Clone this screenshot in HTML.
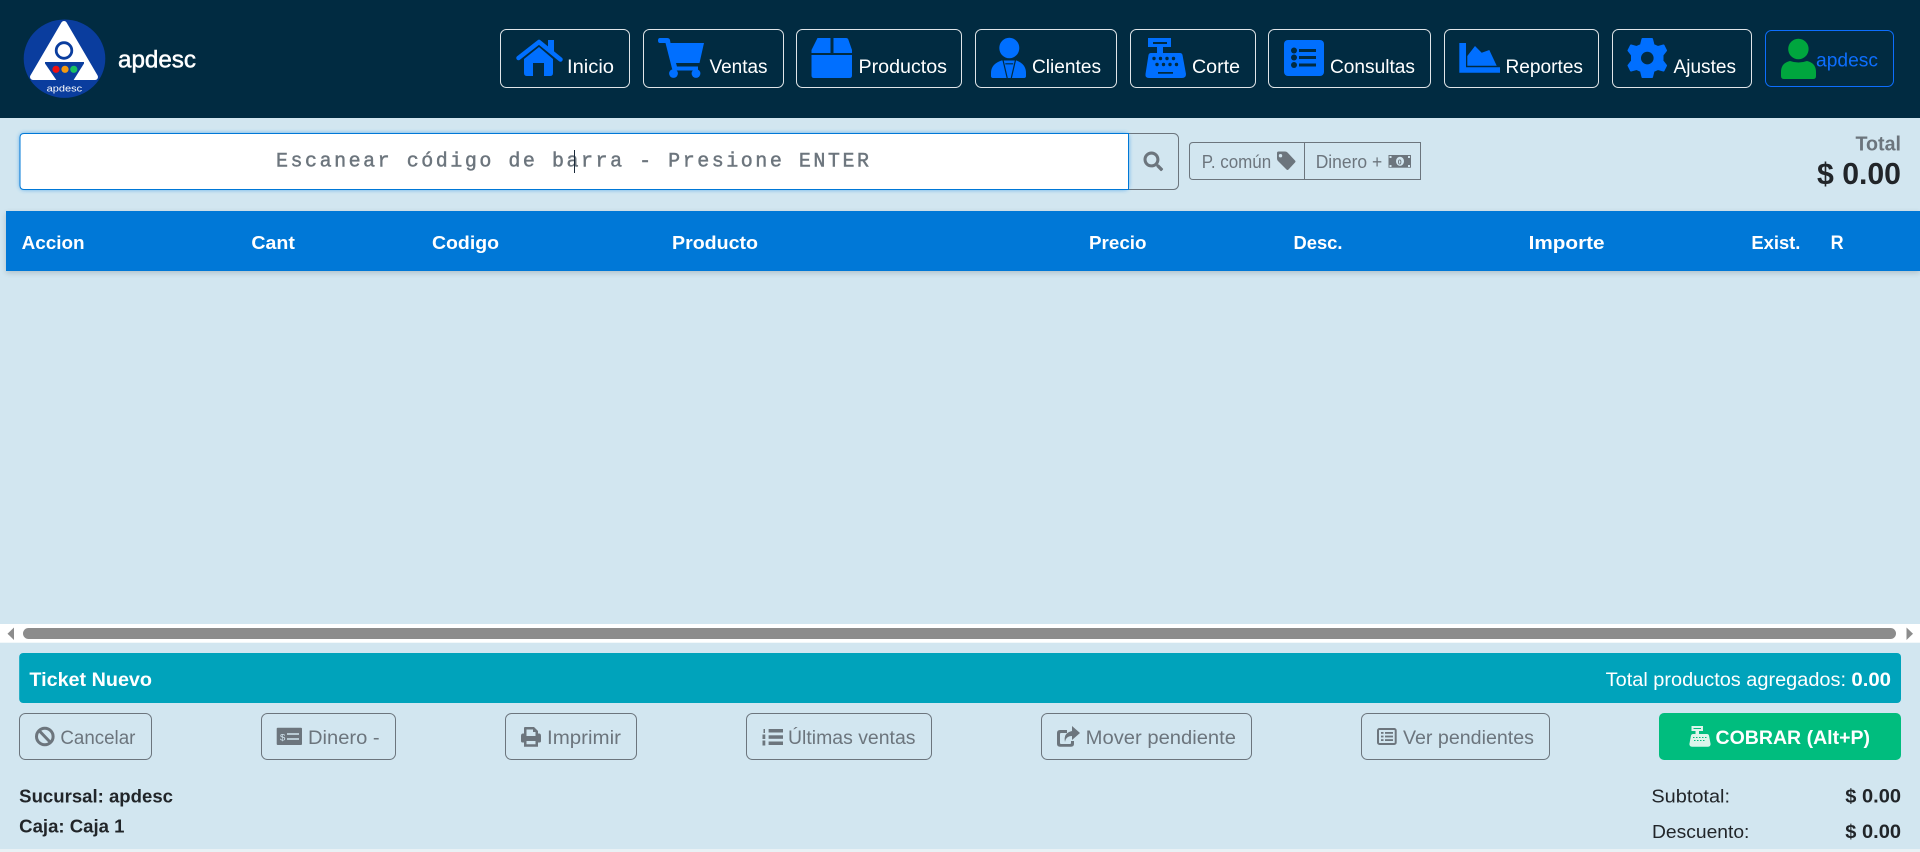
<!DOCTYPE html>
<html lang="es"><head><meta charset="utf-8"><title>apdesc</title>
<style>
html,body{margin:0;padding:0;background:#D2E6F0;overflow:hidden}
svg{display:block}
text{font-family:"Liberation Sans",sans-serif}
.n{font-size:19px;fill:#fff}
.th{font-size:18px;font-weight:700;fill:#fff}
.g{font-size:18px;fill:#6c757d}
.k{font-size:18px;font-weight:700;fill:#212529}
.r{font-size:18px;fill:#212529}
.i{fill:#006FFF}
.btn{fill:none;stroke:#fff;stroke-width:1;opacity:.88}
.ob{fill:none;stroke:#6c757d;stroke-width:1}
</style></head><body>
<svg xmlns="http://www.w3.org/2000/svg" width="1920" height="852" viewBox="0 0 1920 852">
<defs>
<filter id="gl" x="-2%" y="-30%" width="104%" height="160%"><feGaussianBlur stdDeviation="2.5"/></filter>
<filter id="sh" x="-1%" y="-20%" width="102%" height="160%"><feGaussianBlur stdDeviation="3"/></filter>
</defs>
<rect width="1920" height="852" fill="#D2E6F0"/>
<rect y="849" width="1920" height="3" fill="#E9F1F5"/>
<!-- header -->
<rect width="1920" height="118" fill="#012B41"/>
<!-- logo -->
<ellipse cx="64.5" cy="58.7" rx="40.8" ry="39.2" fill="#0A3D9E"/>
<path d="M64 24 L95 77 H33 Z" fill="#fff" stroke="#fff" stroke-width="6" stroke-linejoin="round"/>
<circle cx="64" cy="50.5" r="7.8" fill="#fff" stroke="#0A3D9E" stroke-width="2.8"/>
<path d="M45 62 H84 V63.500 L73 81 H57 L45 63.500 Z" fill="#0A3D9E"/>
<circle cx="56" cy="69.3" r="3.6" fill="#F01010"/><circle cx="65" cy="69.3" r="3.6" fill="#F59A10"/><circle cx="73.8" cy="69.3" r="3.6" fill="#18C060"/>
<text x="46.7" y="91.5" font-size="9.5" fill="#fff" textLength="35.5" lengthAdjust="spacingAndGlyphs">apdesc</text>
<text x="118" y="67.5" font-size="24" fill="#fff" stroke="#fff" stroke-width=".5" textLength="78" lengthAdjust="spacingAndGlyphs">apdesc</text>
<!-- nav -->
<rect class="btn" x="500.500" y="29.500" width="129" height="58" rx="6"/>
<path class="i" d="M539 47 L553 59 V73 Q553 76 550 76 H544 V63 H533 V76 H527 Q524 76 524 73 V59 Z"/>
<path fill="none" stroke="#006FFF" stroke-width="4.500" stroke-linecap="round" stroke-linejoin="round" d="M518.500 58 L539 42 L560.500 59.500"/>
<rect class="i" x="548" y="40" width="6" height="12"/>
<text class="n" x="567" y="73" textLength="47" lengthAdjust="spacingAndGlyphs">Inicio</text>

<rect class="btn" x="643.500" y="29.500" width="140" height="58" rx="6"/>
<path class="i" d="M660 38 H667 Q669.500 38 670 40 L670.500 43 H704 L699.500 63 H676 L677 66.500 H698 V70.500 H675 Q672.500 70.500 672 68.500 L665.500 43 H660 Q658 43 658 40.500 Q658 38 660 38 Z"/>
<circle class="i" cx="673.500" cy="73.500" r="4.400"/><circle class="i" cx="696" cy="73.500" r="4.400"/>
<text class="n" x="709.500" y="73" textLength="58" lengthAdjust="spacingAndGlyphs">Ventas</text>

<rect class="btn" x="796.500" y="29.500" width="165" height="58" rx="6"/>
<path class="i" d="M817.500 38 H830.500 V53 H811.500 V50 Z M833.500 38 H846 Q848 38 848.500 40 L852 50 V53 H833.500 Z M811.500 55 H852 V75.500 Q852 78 849.500 78 H814 Q811.500 78 811.500 75.500 Z"/>
<text class="n" x="858.500" y="73" textLength="88.500" lengthAdjust="spacingAndGlyphs">Productos</text>

<rect class="btn" x="975.500" y="29.500" width="141" height="58" rx="6"/>
<ellipse class="i" cx="1009.300" cy="48" rx="10" ry="10.300"/>
<path class="i" d="M1001.500 60.500 Q991 64 991 73 V76 Q991 78 993 78 H1024 Q1026 78 1026 76 V73 Q1026 64 1016.500 60.500 Z"/>
<path fill="none" stroke="#012B41" stroke-width="1.200" d="M1003 60 L1007.200 78 M1015.500 60 L1011.300 78 M1005.300 63.800 H1013.200"/>
<text class="n" x="1032" y="73" textLength="69" lengthAdjust="spacingAndGlyphs">Clientes</text>

<rect class="btn" x="1130.500" y="29.500" width="125" height="58" rx="6"/>
<path class="i" fill-rule="evenodd" d="M1148 38 H1171 V47 H1163 V53 H1180 Q1182 53 1182.500 55 L1186 74 Q1186 78 1182 78 H1149 Q1145 78 1145.500 74 L1148.500 55 Q1149 53 1151 53 H1157 V47 H1148 Z M1153 42 V44 H1167 V42 Z M1158 72 V73.800 H1173 V72 Z"/>
<g fill="#012B41"><circle cx="1154" cy="58.500" r="1.700"/><circle cx="1160.500" cy="58.500" r="1.700"/><circle cx="1167" cy="58.500" r="1.700"/><circle cx="1173.500" cy="58.500" r="1.700"/><circle cx="1157" cy="64.500" r="1.700"/><circle cx="1163.500" cy="64.500" r="1.700"/><circle cx="1170" cy="64.500" r="1.700"/><circle cx="1176.500" cy="64.500" r="1.700"/></g>
<text class="n" x="1192" y="73" textLength="48" lengthAdjust="spacingAndGlyphs">Corte</text>

<rect class="btn" x="1268.500" y="29.500" width="162" height="58" rx="6"/>
<rect class="i" x="1284" y="40" width="40" height="36" rx="4"/>
<g fill="#012B41"><circle cx="1294" cy="50.500" r="3"/><circle cx="1294" cy="57.500" r="3"/><circle cx="1294" cy="65" r="3"/><rect x="1299" y="49" width="17" height="3"/><rect x="1299" y="56" width="17" height="3"/><rect x="1299" y="63.500" width="17" height="3"/></g>
<text class="n" x="1330" y="73" textLength="85" lengthAdjust="spacingAndGlyphs">Consultas</text>

<rect class="btn" x="1444.500" y="29.500" width="154" height="58" rx="6"/>
<path class="i" d="M1459.300 43 H1466 V67.300 H1500 V72.800 H1459.300 Z M1467.300 65.700 V56 L1475 46 L1481.700 52.700 L1489.300 50 L1496.700 65.700 Z"/>
<text class="n" x="1505.500" y="73" textLength="77.500" lengthAdjust="spacingAndGlyphs">Reportes</text>

<rect class="btn" x="1612.500" y="29.500" width="139" height="58" rx="6"/>
<path class="i" stroke="#006FFF" stroke-width="2" stroke-linejoin="round" fill-rule="evenodd" d="M1642.500 39 H1652 L1653.500 45 L1658 47 L1663.500 45.500 L1666 50.500 L1662.500 55 V61 L1666 65.500 L1663.500 70.500 L1658 69 L1653.500 71 L1652 77 H1642.500 L1641 71 L1636.500 69 L1631 70.500 L1628.500 65.500 L1632 61 V55 L1628.500 50.500 L1631 45.500 L1636.500 47 L1641 45 Z M1647.300 50.800 A7.300 7.300 0 1 0 1647.310 65.400 A7.300 7.300 0 1 0 1647.300 50.800 Z"/>
<text class="n" x="1673.500" y="73" textLength="62.500" lengthAdjust="spacingAndGlyphs">Ajustes</text>

<rect x="1765.500" y="30.500" width="128" height="56" rx="6" fill="none" stroke="#0D6EFD"/>
<ellipse cx="1798.400" cy="49" rx="10.200" ry="10.300" fill="#00A63E"/>
<path d="M1790 61 Q1798.500 64 1807 61 Q1816 63 1816 72 V76 Q1816 79 1813 79 H1784 Q1781 79 1781 76 V72 Q1781 63 1790 61 Z" fill="#00A63E"/>
<text x="1816" y="66.500" font-size="19" fill="#0D6EFD" textLength="62" lengthAdjust="spacingAndGlyphs">apdesc</text>

<!-- search -->
<rect x="1120" y="133.500" width="58.500" height="56" rx="5" class="ob"/>
<rect x="20" y="133.500" width="1108.500" height="56" rx="4" fill="#3B9BE8" opacity=".9" filter="url(#gl)"/>
<path d="M24 133.500 H1128.500 V189.500 H24 Q20 189.500 20 185.500 V137.500 Q20 133.500 24 133.500 Z" fill="#fff" stroke="#0078D7" stroke-width="1"/>
<text x="276" y="166.500" style="font-family:'Liberation Mono',monospace" font-size="20" fill="#6c757d" stroke="#6c757d" stroke-width=".45" textLength="593">Escanear código de barra - Presione ENTER</text>
<rect x="574" y="150" width="1" height="23" fill="#1a2a3a"/>
<path transform="translate(1143.500 151.500) scale(.0383)" fill="#6c757d" d="M505 442.700L405.300 343c-4.500-4.500-10.600-7-17-7H372c27.600-35.300 44-79.700 44-128C416 93.100 322.900 0 208 0S0 93.100 0 208s93.100 208 208 208c48.300 0 92.700-16.400 128-44v16.300c0 6.400 2.500 12.500 7 17l99.700 99.700c9.400 9.400 24.600 9.400 33.900 0l28.300-28.300c9.400-9.400 9.400-24.600.1-34zM208 336c-70.700 0-128-57.200-128-128 0-70.700 57.200-128 128-128 70.700 0 128 57.200 128 128 0 70.700-57.200 128-128 128z"/>

<!-- small group -->
<path class="ob" d="M1193 142.500 H1420.500 V179.500 H1193 Q1189.500 179.500 1189.500 176 V146 Q1189.500 142.500 1193 142.500 Z M1304.500 142.500 V179.500"/>
<text class="g" x="1201.700" y="167.800" textLength="69.500" lengthAdjust="spacingAndGlyphs">P. común</text>
<path fill="#6c757d" fill-rule="evenodd" d="M1277 153 Q1277 151.500 1278.500 151.500 H1285 Q1286.500 151.500 1287.500 152.500 L1295 160.500 Q1296 161.500 1295 162.500 L1288.500 169.500 Q1287.500 170.500 1286.500 169.500 L1278 161 Q1277 160 1277 158.500 Z M1280.500 154 A1.700 1.700 0 1 0 1280.510 157.400 A1.700 1.700 0 1 0 1280.500 154 Z"/>
<text class="g" x="1315.700" y="167.800" textLength="66.500" lengthAdjust="spacingAndGlyphs">Dinero +</text>
<rect x="1388.500" y="155" width="22.500" height="12.700" fill="#6c757d"/>
<ellipse cx="1400" cy="161.300" rx="4" ry="4.600" fill="#D2E6F0"/>
<text x="1397.800" y="164.500" font-size="7" fill="#6c757d" font-weight="700">0</text>
<g fill="#D2E6F0"><rect x="1389.500" y="156" width="2" height="2"/><rect x="1408" y="156" width="2" height="2"/><rect x="1389.500" y="165" width="2" height="2"/><rect x="1408" y="165" width="2" height="2"/></g>

<!-- total -->
<text x="1855.500" y="150.700" font-size="20" font-weight="700" fill="#6c757d" textLength="45.500" lengthAdjust="spacingAndGlyphs">Total</text>
<text x="1817" y="184" font-size="31" font-weight="700" fill="#212529" textLength="84" lengthAdjust="spacingAndGlyphs">$ 0.00</text>

<!-- table head -->
<rect x="6" y="213" width="1914" height="60" fill="#000" opacity=".16" filter="url(#sh)"/>
<rect x="6" y="211" width="1914" height="60" fill="#0078D7"/>
<text class="th" x="21.600" y="249" textLength="63" lengthAdjust="spacingAndGlyphs">Accion</text>
<text class="th" x="251.400" y="249" textLength="43.500" lengthAdjust="spacingAndGlyphs">Cant</text>
<text class="th" x="432" y="249" textLength="67" lengthAdjust="spacingAndGlyphs">Codigo</text>
<text class="th" x="672" y="249" textLength="86" lengthAdjust="spacingAndGlyphs">Producto</text>
<text class="th" x="1089" y="249" textLength="57.500" lengthAdjust="spacingAndGlyphs">Precio</text>
<text class="th" x="1293.500" y="249" textLength="49" lengthAdjust="spacingAndGlyphs">Desc.</text>
<text class="th" x="1528.600" y="249" textLength="76" lengthAdjust="spacingAndGlyphs">Importe</text>
<text class="th" x="1751.400" y="249" textLength="49" lengthAdjust="spacingAndGlyphs">Exist.</text>
<text class="th" x="1830.600" y="249" style="font-size:19px" textLength="13" lengthAdjust="spacingAndGlyphs">R</text>

<!-- scrollbar -->
<rect y="624" width="1920" height="18.700" fill="#fff"/>
<rect x="23" y="628" width="1873" height="11" rx="5.500" fill="#8C8C8C"/>
<path d="M14 627.500 V640 L7.500 633.700 Z" fill="#8C8C8C"/>
<path d="M1906.500 627.500 V640 L1913 633.700 Z" fill="#8C8C8C"/>

<!-- ticket bar -->
<rect x="19.200" y="653" width="1881.800" height="50" rx="4" fill="#00A3BB"/>
<text x="29.400" y="686" font-size="19" font-weight="700" fill="#fff" textLength="122.600" lengthAdjust="spacingAndGlyphs">Ticket Nuevo</text>
<text x="1605.700" y="686" font-size="19" fill="#fff" textLength="240.300" lengthAdjust="spacingAndGlyphs">Total productos agregados:</text>
<text x="1851.400" y="686" font-size="19" font-weight="700" fill="#fff" textLength="39.600" lengthAdjust="spacingAndGlyphs">0.00</text>

<!-- action buttons -->
<rect class="ob" x="19.500" y="713.500" width="132" height="46" rx="6"/>
<circle cx="44.800" cy="736.500" r="8.300" fill="none" stroke="#6c757d" stroke-width="3"/>
<path d="M39 730.500 L50.500 742.500" stroke="#6c757d" stroke-width="3"/>
<text class="g" x="60.400" y="744" style="font-size:19px" textLength="75" lengthAdjust="spacingAndGlyphs">Cancelar</text>

<rect class="ob" x="261.500" y="713.500" width="134" height="46" rx="6"/>
<rect x="276.700" y="727.700" width="25.300" height="17.300" rx="1" fill="#6c757d"/>
<text x="280" y="740.500" font-size="9.500" fill="#D2E6F0">$</text>
<path d="M287 734 H299 M287 739 H299" stroke="#D2E6F0" stroke-width="1.500"/>
<text class="g" x="308" y="744" style="font-size:19px" textLength="71.600" lengthAdjust="spacingAndGlyphs">Dinero -</text>

<rect class="ob" x="505.500" y="713.500" width="131" height="46" rx="6"/>
<path fill="#6c757d" fill-rule="evenodd" d="M525 727 H534 L538 731 V733.500 H539 Q541 733.500 541 736 V741 Q541 742.500 539.500 742.500 H538 V746.700 H524 V742.500 H522.500 Q521 742.500 521 741 V736 Q521 733.500 523 733.500 H524 V728 Q524 727 525 727 Z M526.500 729.500 V736 H535.500 V732 H533 V729.500 Z M526.500 741 V744.300 H535.500 V741 Z"/>
<text class="g" x="547" y="744" style="font-size:19px" textLength="74" lengthAdjust="spacingAndGlyphs">Imprimir</text>

<rect class="ob" x="746.500" y="713.500" width="185" height="46" rx="6"/>
<g fill="#6c757d"><rect x="768.600" y="729" width="14.400" height="3.500"/><rect x="768.600" y="735.300" width="14.400" height="3.500"/><rect x="768.600" y="741.500" width="14.400" height="3.500"/><rect x="763.500" y="729" width="1.500" height="4"/><rect x="762.500" y="734.500" width="2.800" height="4.500"/><rect x="762.500" y="740.500" width="2.800" height="5"/></g>
<text class="g" x="788" y="744" style="font-size:19px" textLength="127.500" lengthAdjust="spacingAndGlyphs">Últimas ventas</text>

<rect class="ob" x="1041.500" y="713.500" width="210" height="46" rx="6"/>
<path fill="#6c757d" d="M1060 730 H1067 V733 H1061 Q1060 733 1060 734 V743 Q1060 744 1061 744 H1070 Q1071 744 1071 743 V741 H1074 V744 Q1074 746.700 1071 746.700 H1060 Q1057 746.700 1057 744 V733 Q1057 730 1060 730 Z M1072 726 L1080 733 L1072 740 V736 Q1066 736 1065 742 Q1063 733 1072 731 Z"/>
<text class="g" x="1085.700" y="744" style="font-size:19px" textLength="150.300" lengthAdjust="spacingAndGlyphs">Mover pendiente</text>

<rect class="ob" x="1361.500" y="713.500" width="188" height="46" rx="6"/>
<rect x="1378" y="729" width="17.700" height="15" rx="1.500" fill="none" stroke="#6c757d" stroke-width="2"/>
<g fill="#6c757d"><rect x="1381" y="732" width="2.500" height="1.800"/><rect x="1381" y="735.600" width="2.500" height="1.800"/><rect x="1381" y="739.200" width="2.500" height="1.800"/><rect x="1385" y="732" width="8" height="1.800"/><rect x="1385" y="735.600" width="8" height="1.800"/><rect x="1385" y="739.200" width="8" height="1.800"/></g>
<text class="g" x="1403" y="744" style="font-size:19px" textLength="131" lengthAdjust="spacingAndGlyphs">Ver pendientes</text>

<rect x="1659" y="713" width="242" height="47" rx="5" fill="#00BD7E"/>
<path fill="#DDF5EB" fill-rule="evenodd" d="M1691.500 726 H1703 V731 H1699 V734 H1707 Q1708.500 734 1709 735.500 L1710.600 744 Q1710.600 746.700 1708 746.700 H1692 Q1689.400 746.700 1689.400 744 L1691 735.500 Q1691.500 734 1693 734 H1695.500 V731 H1691.500 Z M1693.500 728 V729 H1701 V728 Z"/>
<path stroke="#00BD7E" stroke-width="1" stroke-dasharray="1.500 1.500" d="M1693 737.500 H1707 M1694 740.500 H1706"/>
<text x="1715.500" y="744" font-size="19" font-weight="700" fill="#fff" textLength="154.500" lengthAdjust="spacingAndGlyphs">COBRAR (Alt+P)</text>

<!-- footer info -->
<text class="k" x="19.200" y="802.700" textLength="153.800" lengthAdjust="spacingAndGlyphs">Sucursal: apdesc</text>
<text class="k" x="19.200" y="832.700" textLength="105.300" lengthAdjust="spacingAndGlyphs">Caja: Caja 1</text>
<text class="r" x="1651.400" y="802.700" textLength="78.600" lengthAdjust="spacingAndGlyphs">Subtotal:</text>
<text class="k" x="1845.300" y="802.700" style="font-size:19px" textLength="55.700" lengthAdjust="spacingAndGlyphs">$ 0.00</text>
<text class="r" x="1652" y="838" textLength="97.400" lengthAdjust="spacingAndGlyphs">Descuento:</text>
<text class="k" x="1845.300" y="838" style="font-size:19px" textLength="55.700" lengthAdjust="spacingAndGlyphs">$ 0.00</text>
</svg>
</body></html>
